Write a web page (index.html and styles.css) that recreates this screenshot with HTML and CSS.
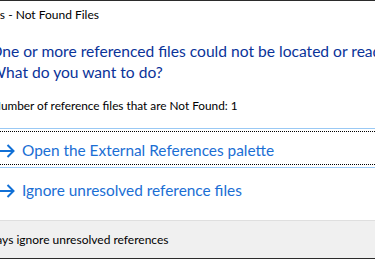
FILE: index.html
```html
<!DOCTYPE html>
<html lang="en">
<head>
<meta charset="utf-8">
<title>References - Not Found Files</title>
<link rel="stylesheet" href="styles.css">
</head>
<body>
<div class="dialog">
  <div class="titlebar"><span class="title">References - Not Found Files</span></div>
  <div class="content">
    <div class="main-instruction">One or more referenced files could not be located or read.<br>What do you want to do?</div>
    <div class="info">Number of reference files that are Not Found: 1</div>
    <div class="links">
      <div class="cmdlink hot">
        <div class="focus">
          <svg class="arrow" width="16" height="14" viewBox="0 0 16 14"><path d="M0 7H14.5M8.5 1L14.5 7L8.5 13" fill="none" stroke="currentColor" stroke-width="2"/></svg>
          <span class="label">Open the External References palette</span>
        </div>
      </div>
      <div class="cmdlink">
        <div class="focus">
          <svg class="arrow" width="16" height="14" viewBox="0 0 16 14"><path d="M0 7H14.5M8.5 1L14.5 7L8.5 13" fill="none" stroke="currentColor" stroke-width="2"/></svg>
          <span class="label">Ignore unresolved reference files</span>
        </div>
      </div>
    </div>
  </div>
  <div class="footer">
    <span class="checkbox"></span>
    <span class="footer-text">Always ignore unresolved references</span>
  </div>
</div>
</body>
</html>
```
FILE: styles.css
```css
html, body {
  margin: 0;
  padding: 0;
  width: 375px;
  height: 259px;
  overflow: hidden;
  background: #ffffff;
}
body {
  font-family: Lato, "Noto Sans", sans-serif;
  color: #000;
}
.dialog {
  height: 259px;
  box-sizing: border-box;
  border-top: 1px solid #2b2b2b;
  border-bottom: 1px solid #2b2b2b;
  display: flex;
  flex-direction: column;
  white-space: nowrap;
}
.titlebar {
  height: 30px;
  padding-top: 6px;
  box-sizing: border-box;
  font-size: 12px;
  line-height: 16px;
}
.title {
  display: block;
  margin-left: -53px;
  color: #000;
}
.content {
  padding-top: 10px;
  margin-left: -8px;
}
.main-instruction {
  margin-left: -2px;
  font-size: 15.6px;
  line-height: 21px;
  color: #0a3399;
}
.info {
  margin-top: 15px;
  font-size: 11.8px;
  line-height: 16px;
  color: #000;
}
.links {
  margin-top: 14px;
  margin-left: 7px;
  display: flex;
  flex-direction: column;
}
.cmdlink {
  height: 40px;
  box-sizing: border-box;
  border-top: 1px solid transparent;
  border-bottom: 1px solid transparent;
  padding: 2px 0;
  margin-left: -10px;
}
.cmdlink.hot {
  border-color: #99c9f5;
}
.focus {
  height: 34px;
  box-sizing: border-box;
  border-top: 1px dotted transparent;
  border-bottom: 1px dotted transparent;
  padding: 8px 0 0 10px;
  display: flex;
  align-items: flex-start;
  gap: 7px;
}
.hot .focus {
  border-top-color: #000;
  border-bottom-color: #000;
}
.arrow {
  color: #1170d6;
  margin-top: 4px;
  flex: none;
}
.label {
  font-size: 15.4px;
  line-height: 20px;
  color: #1a6ed4;
}
.footer {
  margin-top: auto;
  height: 38px;
  box-sizing: border-box;
  border-top: 1px solid #dfdfdf;
  background: #f0f0f0;
  padding-top: 11px;
  display: flex;
  align-items: flex-start;
  gap: 5px;
  margin-left: -42px;
  font-size: 12px;
  line-height: 16px;
}
.checkbox {
  width: 13px;
  height: 13px;
  box-sizing: border-box;
  border: 1px solid #333;
  background: #fff;
  margin-top: 2px;
  flex: none;
}
.footer-text {
  color: #000;
}
```
